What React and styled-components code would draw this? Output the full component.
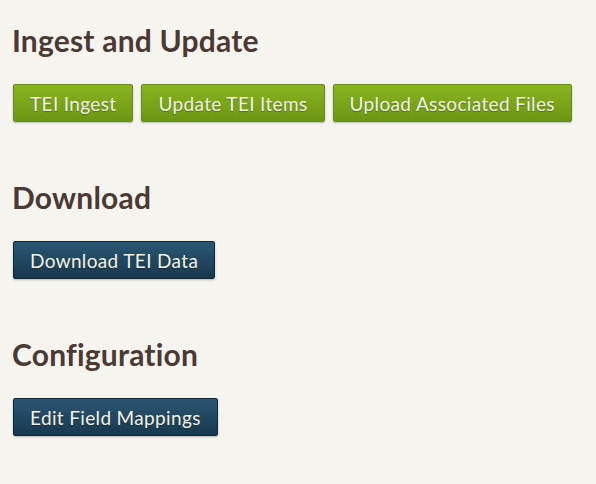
import styled, { createGlobalStyle } from "styled-components";

const GlobalStyle = createGlobalStyle`
    body {
        margin: 0;
        background: #f5f4ef;
        font-family: 'Lato', 'Open Sans', sans-serif;
    }
`

export default function App() {
    return (
        <>
            <GlobalStyle />
            <Page>
                <Section>
                    <Heading>Ingest and Update</Heading>
                    <ButtonRow>
                        <Button $variant="green">TEI Ingest</Button>
                        <Button $variant="green">Update TEI Items</Button>
                        <Button $variant="green">Upload Associated Files</Button>
                    </ButtonRow>
                </Section>

                <Section>
                    <Heading>Download</Heading>
                    <ButtonRow>
                        <Button $variant="navy">Download TEI Data</Button>
                    </ButtonRow>
                </Section>

                <Section>
                    <Heading>Configuration</Heading>
                    <ButtonRow>
                        <Button $variant="navy">Edit Field Mappings</Button>
                    </ButtonRow>
                </Section>
            </Page>
        </>
    )
}

const Page = styled.div`
    width: 596px;
    height: 484px;
    padding: 22px 12px 0;
    box-sizing: border-box;
    display: flex;
    flex-direction: column;
    gap: 57px;
`

const Section = styled.section`
    display: flex;
    flex-direction: column;
    gap: 26px;
`

const Heading = styled.h2`
    margin: 0;
    font-size: 30px;
    line-height: 36px;
    font-weight: 700;
    letter-spacing: 0.2px;
    color: #4b3933;
`

const ButtonRow = styled.div`
    display: flex;
    gap: 8px;
    padding-left: 1px;
`

const colours = {
    green: {
        top: "#88b420",
        bottom: "#6c9713",
        border: "#698a1c",
    },
    navy: {
        top: "#2b5773",
        bottom: "#18384e",
        border: "#10293a",
    },
}

const Button = styled.button`
    height: 38px;
    padding: 0 16px;
    border: 1px solid ${(p) => colours[p.$variant].border};
    border-radius: 2px;
    background: linear-gradient(${(p) => colours[p.$variant].top}, ${(p) => colours[p.$variant].bottom});
    box-shadow: 0 1px 2px rgba(0, 0, 0, 0.25);
    color: #f3f3e6;
    font-family: 'Lato', 'Open Sans', sans-serif;
    font-size: 19px;
    letter-spacing: 0.35px;
    text-shadow: 0 1px 1px rgba(0, 0, 0, 0.3);
    cursor: pointer;
`
